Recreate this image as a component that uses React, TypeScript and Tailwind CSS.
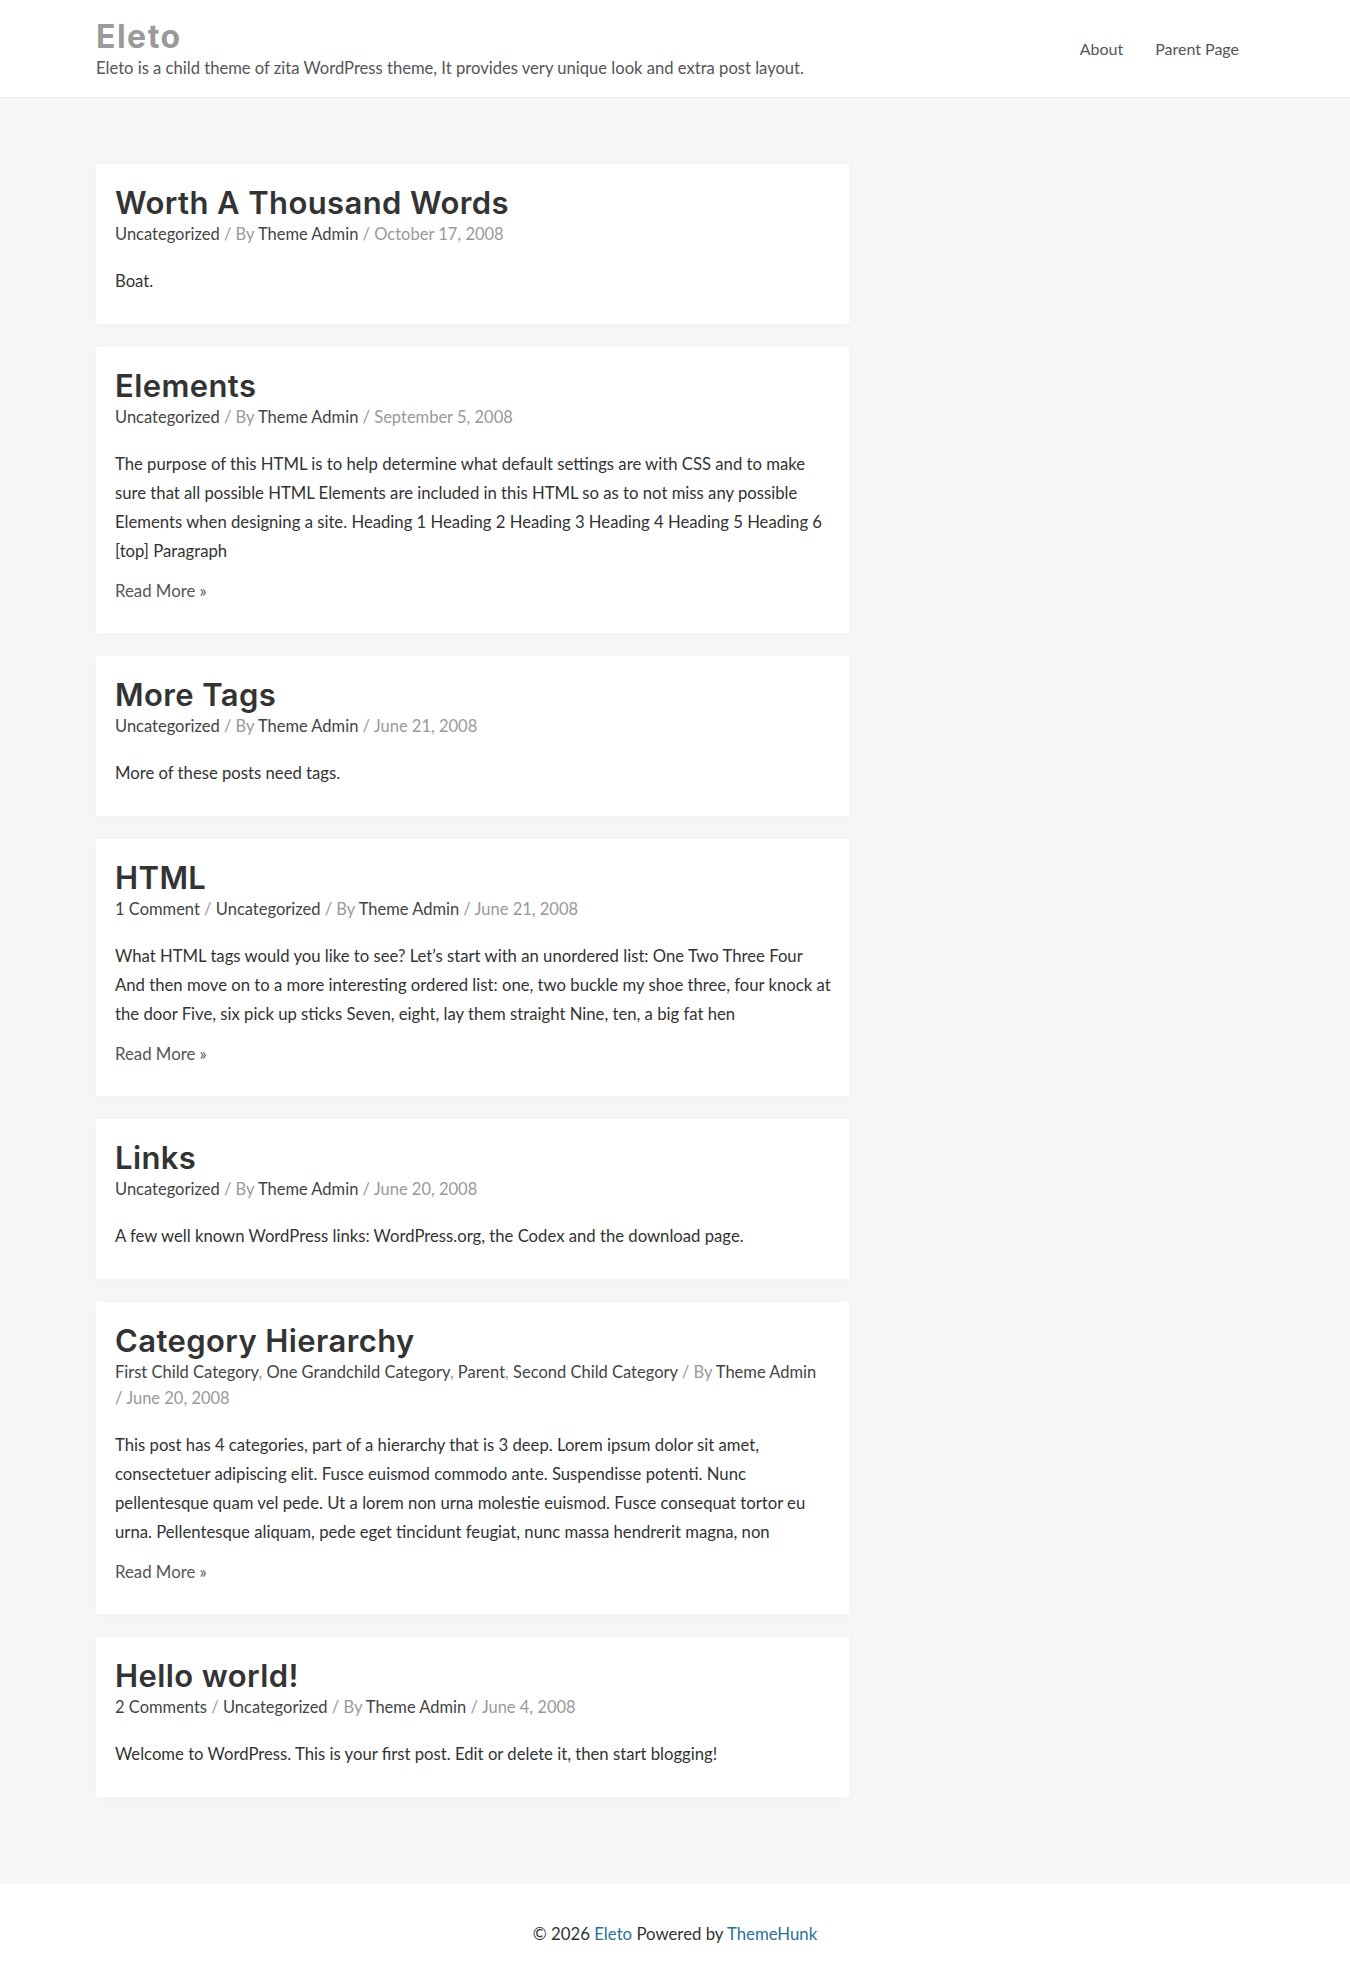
import React from "react";

type Seg = { t: string; light?: boolean };

type Post = {
  title: string;
  meta: Seg[][];
  lines: string[];
  readMore?: boolean;
};

const sep = (t: string): Seg => ({ t, light: true });
const dark = (t: string): Seg => ({ t });

const posts: Post[] = [
  {
    title: "Worth A Thousand Words",
    meta: [[dark("Uncategorized"), sep(" / By "), dark("Theme Admin"), sep(" / October 17, 2008")]],
    lines: ["Boat."],
  },
  {
    title: "Elements",
    meta: [[dark("Uncategorized"), sep(" / By "), dark("Theme Admin"), sep(" / September 5, 2008")]],
    lines: [
      "The purpose of this HTML is to help determine what default settings are with CSS and to make",
      "sure that all possible HTML Elements are included in this HTML so as to not miss any possible",
      "Elements when designing a site. Heading 1 Heading 2 Heading 3 Heading 4 Heading 5 Heading 6",
      "[top] Paragraph",
    ],
    readMore: true,
  },
  {
    title: "More Tags",
    meta: [[dark("Uncategorized"), sep(" / By "), dark("Theme Admin"), sep(" / June 21, 2008")]],
    lines: ["More of these posts need tags."],
  },
  {
    title: "HTML",
    meta: [
      [
        dark("1 Comment"),
        sep(" / "),
        dark("Uncategorized"),
        sep(" / By "),
        dark("Theme Admin"),
        sep(" / June 21, 2008"),
      ],
    ],
    lines: [
      "What HTML tags would you like to see? Let\u2019s start with an unordered list: One Two Three Four",
      "And then move on to a more interesting ordered list: one, two buckle my shoe three, four knock at",
      "the door Five, six pick up sticks Seven, eight, lay them straight Nine, ten, a big fat hen",
    ],
    readMore: true,
  },
  {
    title: "Links",
    meta: [[dark("Uncategorized"), sep(" / By "), dark("Theme Admin"), sep(" / June 20, 2008")]],
    lines: ["A few well known WordPress links: WordPress.org, the Codex and the download page."],
  },
  {
    title: "Category Hierarchy",
    meta: [
      [
        dark("First Child Category"),
        sep(", "),
        dark("One Grandchild Category"),
        sep(", "),
        dark("Parent"),
        sep(", "),
        dark("Second Child Category"),
        sep(" / By "),
        dark("Theme Admin"),
      ],
      [sep("/ June 20, 2008")],
    ],
    lines: [
      "This post has 4 categories, part of a hierarchy that is 3 deep. Lorem ipsum dolor sit amet,",
      "consectetuer adipiscing elit. Fusce euismod commodo ante. Suspendisse potenti. Nunc",
      "pellentesque quam vel pede. Ut a lorem non urna molestie euismod. Fusce consequat tortor eu",
      "urna. Pellentesque aliquam, pede eget tincidunt feugiat, nunc massa hendrerit magna, non",
    ],
    readMore: true,
  },
  {
    title: "Hello world!",
    meta: [
      [
        dark("2 Comments"),
        sep(" / "),
        dark("Uncategorized"),
        sep(" / By "),
        dark("Theme Admin"),
        sep(" / June 4, 2008"),
      ],
    ],
    lines: ["Welcome to WordPress. This is your first post. Edit or delete it, then start blogging!"],
  },
];

function Card({ post }: { post: Post }) {
  return (
    <article className="bg-white px-[19px] pt-[20px] pb-[28px] shadow-[0_2px_14px_rgba(0,0,0,0.025)]">
      <h2 className="font-['Inter',sans-serif] font-semibold text-[31px] leading-[37px] text-[#333] tracking-[0.4px]">
        {post.title}
      </h2>
      <div className="text-[16.5px] leading-[26px]">
        {post.meta.map((row, i) => (
          <div key={i} className="whitespace-nowrap">
            {row.map((s, j) => (
              <span key={j} className={s.light ? "text-[#999]" : "text-[#444]"}>
                {s.t}
              </span>
            ))}
          </div>
        ))}
      </div>
      <div className="mt-[20px] text-[16.7px] leading-[29px] text-[#333]">
        {post.lines.map((l, i) => (
          <div key={i} className="whitespace-nowrap">
            {l}
          </div>
        ))}
      </div>
      {post.readMore && (
        <div className="mt-[10px] text-[16.8px] leading-[29px] text-[#555]">Read More »</div>
      )}
    </article>
  );
}

export default function App() {
  return (
    <div className="font-['Lato','Noto_Sans',sans-serif] bg-[#f6f6f6] min-h-[1984px] flex flex-col">
      <header className="bg-white border-b border-[#eeeeee]">
        <div className="mx-auto w-full max-w-[1200px] px-[21px] pt-[19px] pb-[19px] flex items-center justify-between">
          <div>
            <div className="font-['Inter',sans-serif] font-bold text-[32px] leading-[36px] tracking-[1.5px] text-[#9a9a9a]">
              Eleto
            </div>
            <div className="mt-[3px] text-[16.6px] leading-[20px] text-[#555]">
              Eleto is a child theme of zita WordPress theme, It provides very unique look and extra post layout.
            </div>
          </div>
          <nav className="flex items-center gap-[2px] text-[16px] leading-[20px] text-[#555]">
            <span className="px-[15px]">About</span>
            <span className="px-[15px]">Parent Page</span>
          </nav>
        </div>
      </header>

      <main className="flex-1">
        <div className="mx-auto w-full max-w-[1200px] px-[21px] pt-[66px] pb-[87px]">
          <div className="w-[65%] flex flex-col gap-[23px]">
            {posts.map((p) => (
              <Card key={p.title} post={p} />
            ))}
          </div>
        </div>
      </main>

      <footer className="bg-white h-[100px] flex items-center justify-center text-[16.8px] text-[#333]">
        <span>
          © 2026 <span className="text-[#2a7099]">Eleto</span> Powered by{" "}
          <span className="text-[#2a7099]">ThemeHunk</span>
        </span>
      </footer>
    </div>
  );
}
